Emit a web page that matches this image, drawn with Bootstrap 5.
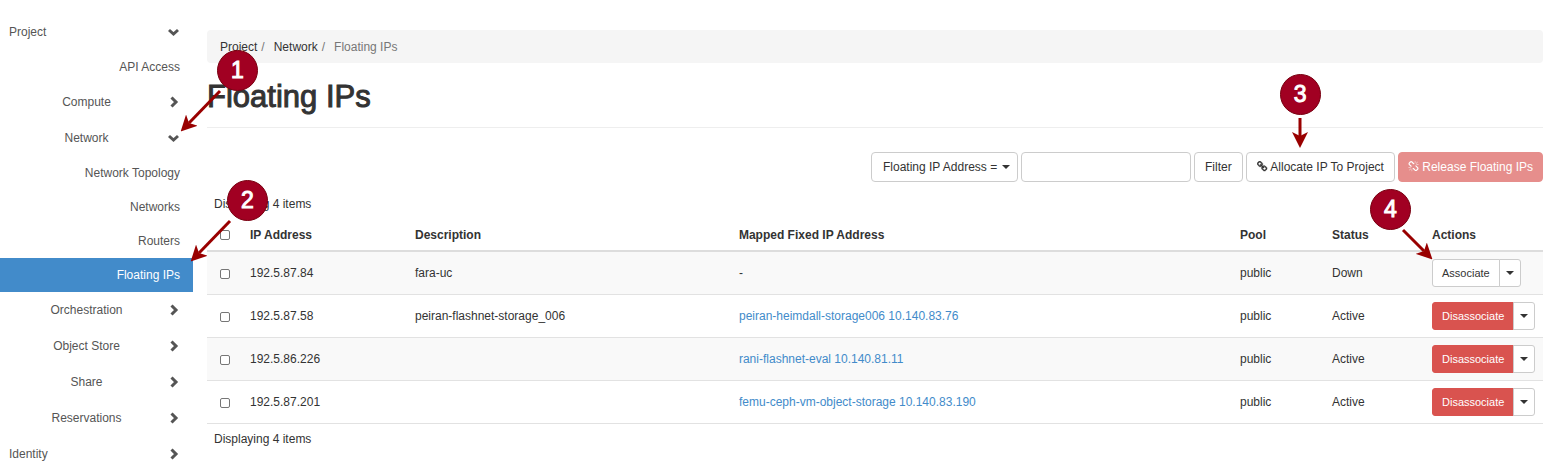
<!DOCTYPE html>
<html lang="en">
<head>
<meta charset="utf-8">
<meta name="viewport" content="width=device-width, initial-scale=1">
<title>Floating IPs</title>
<link href="https://cdn.jsdelivr.net/npm/bootstrap@5.3.0/dist/css/bootstrap.min.css" rel="stylesheet">
<style>
  body { font-family: "Liberation Sans", Arial, sans-serif; font-size: 12px; line-height: 18px; color: #333; background: #fff; }

  /* Sidebar */
  .side-nav { width: 193px; padding-top: 14px; }
  .side-nav a { color: #555; text-decoration: none; }
  .side-toggle { height: 36px; padding: 0 13px 0 5px; }
  .side-top { padding-left: 9px; }
  .side-leaf { height: 34px; padding: 0 13px; }
  .side-nav .side-leaf.active { background: #428bca; color: #fff; }
  .chev { width: 12px; height: 12px; fill: none; stroke: #555; stroke-width: 3; }

  /* Main column */
  .main-pane { padding: 30px 14px 0 14px; }
  .crumbs { --bs-breadcrumb-divider-color: #777; --bs-breadcrumb-item-active-color: #777; background: #f5f5f5; border-radius: 4px; padding: 8px 13px; height: 33px; }
  .crumbs .breadcrumb-item + .breadcrumb-item { padding-left: 4px; }
  .crumbs .breadcrumb-item + .breadcrumb-item::before { padding-right: 9px; }
  .crumbs a { color: #333; text-decoration: none; }
  .page-title { font-size: 31px; line-height: 36px; font-weight: 400; -webkit-text-stroke: 1px #333; margin: 16px 0 0; padding-bottom: 12px; border-bottom: 1px solid #eee; }
  .tools { margin-top: 24px; gap: 3px; }
  .tools .btn, .tools .form-select, .tools .form-control { height: 30px; font-size: 12px; line-height: 18px; border-radius: 4px; padding: 5px 10px; color: #333; border-color: #ccc; box-shadow: none; }
  .tools .form-select { width: auto; padding-left: 11px; padding-right: 18px; background: #fff url("data:image/svg+xml,%3Csvg xmlns='http://www.w3.org/2000/svg' viewBox='0 0 8 4'%3E%3Cpath d='M0 0h8L4 4z' fill='%23333'/%3E%3C/svg%3E") no-repeat right 7px center / 8px 4px; }
  .tools .form-control { width: 170px; }
  .tools .btn-release { background: #d9534f; border-color: #d9534f; color: #fff; opacity: .65; padding: 5px 9px; }
  .fa-glyph { width: 11px; height: 11px; fill: currentColor; vertical-align: -1px; }
  .count-line { padding: 0 7px; }
  .count-top { margin-top: 13px; }
  .count-end { margin-top: 6px; }

  .ip-table { table-layout: fixed; --bs-table-color: #333; --bs-table-striped-color: #333; --bs-table-striped-bg: #f9f9f9; border-color: #e2e2e2; vertical-align: middle; }
  .ip-table > thead { vertical-align: middle; }
  .ip-table > :not(caption) > * > * { padding: 7px; }
  .ip-table > thead > tr > th { border-bottom: 2px solid #ddd; height: 38px; padding-top: 12px; padding-bottom: 6px; }
  .ip-table a { color: #428bca; text-decoration: none; }
  .ip-table .form-check-input { display: block; width: 10px; height: 10px; margin: 1px 0 0 6px; border: 1px solid #767676; border-radius: 2px; }
  .col-tick { width: 36px; } .col-ip { width: 12.35%; } .col-desc { width: 24.25%; }
  .col-pool { width: 92px; } .col-status { width: 100px; } .col-act { width: 118px; }
  .ip-table .btn { font-size: 11px; line-height: 18px; padding: 4px 9px; height: 28px; border-radius: 3px; }
  .btn-plain { --bs-btn-bg: #fff; --bs-btn-color: #333; --bs-btn-border-color: #ccc; --bs-btn-hover-bg: #e6e6e6; --bs-btn-hover-border-color: #adadad; }
  .btn-warn { --bs-btn-bg: #d9534f; --bs-btn-color: #fff; --bs-btn-border-color: #d9534f; --bs-btn-hover-bg: #c9302c; --bs-btn-hover-color: #fff; }
  .ip-table .btn.dropdown-toggle-split { padding: 4px 6px; }
  .ip-table .dropdown-toggle-split::after { border-top-width: 4px; border-left-width: 4px; border-right-width: 4px; vertical-align: 2px; }

  /* Numbered step markers that lie over the page */
  .step { position: absolute; width: 41px; height: 41px; z-index: 5; pointer-events: none; }
  .step span { display: block; height: 41px; border-radius: 50%; background: #a10022; border: 1px solid #780010; color: #fff; text-align: center; font-size: 23px; line-height: 39px; -webkit-text-stroke: 1px #fff; }
  .step svg { position: absolute; left: 0; top: 0; overflow: visible; }
  .step-1 { left: 217px; top: -70px; }
  .step-2 { left: 227px; top: -78px; }
  .step-3 { left: 34px; top: -78px; }
  .step-4 { left: -62px; top: -70px; }
</style>
</head>
<body>
<svg class="position-absolute" width="0" height="0" aria-hidden="true">
  <defs>
    <symbol id="right" viewBox="0 0 12 12"><path d="M3.500 1.500 8 6 3.500 10.500"/></symbol>
    <symbol id="down" viewBox="0 0 12 12"><path d="M1 4 5.500 8 10 4"/></symbol>
    <marker id="head" viewBox="0 0 16 16" refX="4" refY="8" markerWidth="16" markerHeight="16" markerUnits="userSpaceOnUse" orient="auto"><path d="M0 0 16 8 0 16 4 8z" fill="#900"/></marker>
  </defs>
</svg>
<div class="d-flex">
  <nav class="side-nav flex-shrink-0" aria-label="Dashboard">
    <a href="#" class="side-toggle side-top d-flex align-items-center justify-content-between">Project <svg class="chev"><use href="#down"/></svg></a>
    <a href="#" class="side-leaf d-flex align-items-center justify-content-end">API Access</a>
    <a href="#" class="side-toggle d-flex align-items-center"><span class="flex-fill text-center">Compute</span><svg class="chev"><use href="#right"/></svg></a>
    <div class="position-relative">
      <a href="#" class="side-toggle d-flex align-items-center"><span class="flex-fill text-center">Network</span><svg class="chev"><use href="#down"/></svg></a>
      <div class="step step-1"><svg width="41" height="41"><path d="M3 41-28 73" stroke="#900" stroke-width="3" marker-end="url(#head)"/></svg><span>1</span></div>
    </div>
    <a href="#" class="side-leaf d-flex align-items-center justify-content-end">Network Topology</a>
    <a href="#" class="side-leaf d-flex align-items-center justify-content-end">Networks</a>
    <a href="#" class="side-leaf d-flex align-items-center justify-content-end">Routers</a>
    <div class="position-relative">
      <a href="#" class="side-leaf active d-flex align-items-center justify-content-end" aria-current="page">Floating IPs</a>
      <div class="step step-2"><svg width="41" height="41"><path d="M3 41-28 73" stroke="#900" stroke-width="3" marker-end="url(#head)"/></svg><span>2</span></div>
    </div>
    <a href="#" class="side-toggle d-flex align-items-center"><span class="flex-fill text-center">Orchestration</span><svg class="chev"><use href="#right"/></svg></a>
    <a href="#" class="side-toggle d-flex align-items-center"><span class="flex-fill text-center">Object Store</span><svg class="chev"><use href="#right"/></svg></a>
    <a href="#" class="side-toggle d-flex align-items-center"><span class="flex-fill text-center">Share</span><svg class="chev"><use href="#right"/></svg></a>
    <a href="#" class="side-toggle d-flex align-items-center"><span class="flex-fill text-center">Reservations</span><svg class="chev"><use href="#right"/></svg></a>
    <a href="#" class="side-toggle side-top d-flex align-items-center justify-content-between">Identity <svg class="chev"><use href="#right"/></svg></a>
  </nav>

  <main class="main-pane flex-fill">
    <nav aria-label="Breadcrumb">
      <ol class="breadcrumb crumbs mb-0">
        <li class="breadcrumb-item"><a href="#">Project</a></li>
        <li class="breadcrumb-item"><a href="#">Network</a></li>
        <li class="breadcrumb-item active" aria-current="page">Floating IPs</li>
      </ol>
    </nav>
    <h1 class="page-title">Floating IPs</h1>

    <form class="tools d-flex justify-content-end" onsubmit="return false">
      <select class="form-select" aria-label="Filter field"><option>Floating IP Address =</option></select>
      <input type="text" class="form-control" aria-label="Filter value">
      <button type="submit" class="btn btn-plain">Filter</button>
      <div class="position-relative">
        <button type="button" class="btn btn-plain"><svg class="fa-glyph" viewBox="0 0 1792 1792"><path d="M1456 1216q0-40-28-68l-208-208q-28-28-68-28-42 0-72 32 3 3 19 18.500t21.500 21.500 15 19 13 25.500 3.500 27.500q0 40-28 68t-68 28q-15 0-27.500-3.500t-25.500-13-19-15-21.500-21.500-18.500-19q-33 31-33 73 0 40 28 68l206 207q27 27 68 27 40 0 68-26l147-146q28-28 28-67zm-703-705q0-40-28-68l-206-207q-28-28-68-28-39 0-68 27l-147 146q-28 28-28 67 0 40 28 68l208 208q27 27 68 27 42 0 72-31-3-3-19-18.500t-21.500-21.500-15-19-13-25.500-3.500-27.500q0-40 28-68t68-28q15 0 27.500 3.500t25.500 13 19 15 21.500 21.500 18.500 19q33-31 33-73zm895 705q0 120-85 203l-147 146q-83 83-203 83-121 0-204-85l-206-207q-83-83-83-203 0-123 88-209l-88-88q-86 88-208 88-120 0-204-84l-208-208q-84-84-84-204t85-203l147-146q83-83 203-83 121 0 204 85l206 207q83 83 83 203 0 123-88 209l88 88q86-88 208-88 120 0 204 84l208 208q84 84 84 204z" stroke="currentColor" stroke-width="60"/></svg> Allocate IP To Project</button>
        <div class="step step-3"><svg width="41" height="41"><path d="M20 44V62" stroke="#900" stroke-width="3" marker-end="url(#head)"/></svg><span>3</span></div>
      </div>
      <button type="button" class="btn btn-release" disabled><svg class="fa-glyph" viewBox="0 0 1792 1792"><path d="M503 1271l-256 256q-10 9-23 9-12 0-23-9-9-10-9-23t9-23l256-256q10-9 23-9t23 9q9 10 9 23t-9 23zm169 41v320q0 14-9 23t-23 9-23-9-9-23v-320q0-14 9-23t23-9 23 9 9 23zm-224-224q0 14-9 23t-23 9h-320q-14 0-23-9t-9-23 9-23 23-9h320q14 0 23 9t9 23zm1264 128q0 120-85 203l-147 146q-83 83-203 83-121 0-204-85l-334-335q-21-21-42-56l239-18 273 274q28 28 68 28 40 0 68-28l147-146q28-28 28-67 0-40-28-68l-274-275 18-239q35 21 56 42l336 336q84 86 84 204zm-617-724l-239 18-273-274q-28-28-68-28-39 0-68 27l-147 146q-28 28-28 67 0 40 28 68l274 274-18 240q-35-21-56-42l-336-336q-84-86-84-204 0-120 85-203l147-146q83-83 203-83 121 0 204 85l334 335q21 21 42 56zm633 84q0 14-9 23t-23 9h-320q-14 0-23-9t-9-23 9-23 23-9h320q14 0 23 9t9 23zm-544-544v320q0 14-9 23t-23 9-23-9-9-23v-320q0-14 9-23t23-9 23 9 9 23zm407 151l-256 256q-11 9-23 9t-23-9q-9-10-9-23t9-23l256-256q10-9 23-9t23 9q9 10 9 23t-9 23z"/></svg> Release Floating IPs</button>
    </form>

    <div class="count-line count-top">Displaying 4 items</div>
    <table class="table table-striped ip-table mb-0">
      <colgroup><col class="col-tick"><col class="col-ip"><col class="col-desc"><col><col class="col-pool"><col class="col-status"><col class="col-act"></colgroup>
      <thead>
        <tr>
          <th><input type="checkbox" class="form-check-input" aria-label="Select all"></th>
          <th>IP Address</th><th>Description</th><th>Mapped Fixed IP Address</th><th>Pool</th><th>Status</th><th>Actions</th>
        </tr>
      </thead>
      <tbody>
        <tr>
          <td><input type="checkbox" class="form-check-input" aria-label="Select 192.5.87.84"></td>
          <td>192.5.87.84</td><td>fara-uc</td><td>-</td><td>public</td><td>Down</td>
          <td><div class="btn-group align-top"><button type="button" class="btn btn-plain">Associate</button><button type="button" class="btn btn-plain dropdown-toggle dropdown-toggle-split" aria-label="More actions"></button>
            <div class="step step-4"><svg width="41" height="41"><path d="M33 41 54 62" stroke="#900" stroke-width="3" marker-end="url(#head)"/></svg><span>4</span></div></div></td>
        </tr>
        <tr>
          <td><input type="checkbox" class="form-check-input" aria-label="Select 192.5.87.58"></td>
          <td>192.5.87.58</td><td>peiran-flashnet-storage_006</td><td><a href="#">peiran-heimdall-storage006 10.140.83.76</a></td><td>public</td><td>Active</td>
          <td><div class="btn-group align-top"><button type="button" class="btn btn-warn">Disassociate</button><button type="button" class="btn btn-plain dropdown-toggle dropdown-toggle-split" aria-label="More actions"></button></div></td>
        </tr>
        <tr>
          <td><input type="checkbox" class="form-check-input" aria-label="Select 192.5.86.226"></td>
          <td>192.5.86.226</td><td></td><td><a href="#">rani-flashnet-eval 10.140.81.11</a></td><td>public</td><td>Active</td>
          <td><div class="btn-group align-top"><button type="button" class="btn btn-warn">Disassociate</button><button type="button" class="btn btn-plain dropdown-toggle dropdown-toggle-split" aria-label="More actions"></button></div></td>
        </tr>
        <tr>
          <td><input type="checkbox" class="form-check-input" aria-label="Select 192.5.87.201"></td>
          <td>192.5.87.201</td><td></td><td><a href="#">femu-ceph-vm-object-storage 10.140.83.190</a></td><td>public</td><td>Active</td>
          <td><div class="btn-group align-top"><button type="button" class="btn btn-warn">Disassociate</button><button type="button" class="btn btn-plain dropdown-toggle dropdown-toggle-split" aria-label="More actions"></button></div></td>
        </tr>
      </tbody>
    </table>
    <div class="count-line count-end">Displaying 4 items</div>
  </main>
</div>
<script src="https://cdn.jsdelivr.net/npm/bootstrap@5.3.0/dist/js/bootstrap.bundle.min.js"></script>
</body>
</html>
